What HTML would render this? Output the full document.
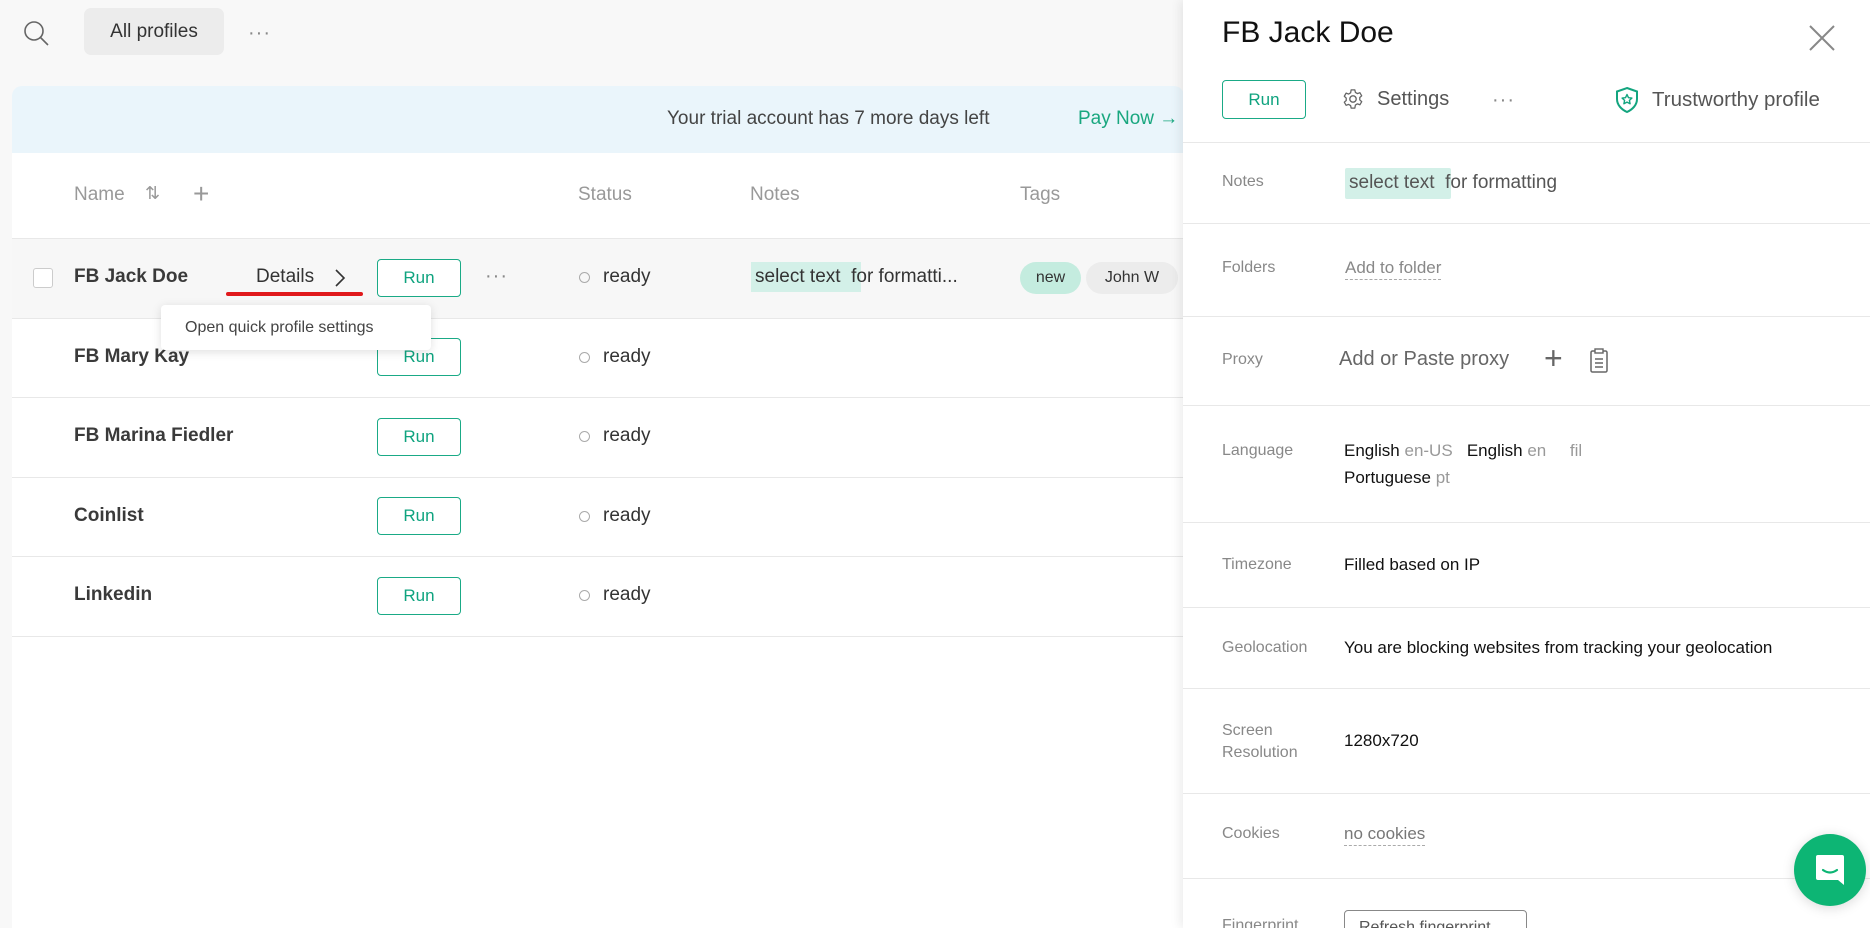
<!DOCTYPE html>
<html><head><meta charset="utf-8"><style>
*{margin:0;padding:0;box-sizing:border-box}
html,body{width:1870px;height:928px;overflow:hidden}
body{background:#f8f8f8;font-family:"Liberation Sans",Arial,sans-serif;position:relative;color:#333}
.a{position:absolute;white-space:nowrap}
.run{position:absolute;border:1.5px solid #1aaa86;border-radius:4px;color:#0fa37f;font-size:17px;display:flex;align-items:center;justify-content:center;background:#fff}
.dots{position:absolute;color:#888;font-size:20px;letter-spacing:1px}
.line{position:absolute;height:1px;background:#e8e8e8}
.lbl{position:absolute;color:#888;font-size:16px;left:1222px}
.val{position:absolute;color:#111;font-size:17px;left:1344px;white-space:nowrap}
.row .nm{font-size:19px;font-weight:bold;color:#3a3a3a}
.st{position:absolute;width:11px;height:11px;border:1.5px solid #aaa;border-radius:50%}
</style></head><body>
<svg class="a" style="left:22px;top:19px" width="30" height="30" viewBox="0 0 30 30"><circle cx="12" cy="12" r="9" fill="none" stroke="#666" stroke-width="1.6"/><line x1="18.5" y1="18.5" x2="26" y2="26" stroke="#666" stroke-width="1.6"/></svg>
<div class="a" style="left:84px;top:8px;width:140px;height:47px;background:#ececec;border-radius:7px;font-size:19px;color:#333;line-height:47px;text-align:center">All profiles</div>
<div class="dots" style="left:248px;top:22px">···</div>
<div class="a" style="left:12px;top:86px;width:1172px;height:68px;background:#eaf5fb;border-radius:10px 10px 0 0"></div>
<div class="a" style="left:667px;top:108px;font-size:19px;color:#444">Your trial account has 7 more days left</div>
<div class="a" style="left:1078px;top:108px;font-size:19px;color:#19a77f">Pay Now →</div>
<div class="a" style="left:12px;top:153px;width:1172px;height:775px;background:#fff"></div>
<div class="a" style="left:74px;top:184px;font-size:19px;color:#999">Name</div>
<div class="a" style="left:145px;top:183px;font-size:18px;color:#999">⇅</div>
<div class="a" style="left:193px;top:178px;font-size:28px;color:#999;font-weight:300">+</div>
<div class="a" style="left:578px;top:184px;font-size:19px;color:#999">Status</div>
<div class="a" style="left:750px;top:184px;font-size:19px;color:#999">Notes</div>
<div class="a" style="left:1020px;top:184px;font-size:19px;color:#999">Tags</div>
<div class="line" style="left:12px;top:238px;width:1172px"></div>
<div class="a" style="left:12px;top:239px;width:1172px;height:79px;background:#f7f7f7"></div>
<div class="line" style="left:12px;top:318px;width:1172px"></div>
<div class="line" style="left:12px;top:397px;width:1172px"></div>
<div class="line" style="left:12px;top:477px;width:1172px"></div>
<div class="line" style="left:12px;top:556px;width:1172px"></div>
<div class="line" style="left:12px;top:636px;width:1172px"></div>
<div class="a" style="left:33px;top:268px;width:20px;height:20px;border:1.5px solid #ccc;border-radius:3px;background:#fff"></div>
<div class="a row" style="left:74px;top:266px"><span class="nm">FB Jack Doe</span></div>
<div class="a" style="left:256px;top:266px;font-size:19px;color:#333">Details</div>
<svg class="a" style="left:333px;top:267px" width="14" height="22"><polyline points="3,3 11,11 3,19" fill="none" stroke="#333" stroke-width="1.6"/></svg>
<div class="a" style="left:226px;top:292px;width:137px;height:4px;background:#e0191c;border-radius:2px"></div>
<div class="dots" style="left:485px;top:265px">···</div>
<div class="a" style="left:751px;top:262px;width:110px;height:30px;background:#d3f0e8"></div>
<div class="a" style="left:755px;top:266px;font-size:19px;color:#333">select text&nbsp; for formatti...</div>
<div class="a" style="left:1020px;top:262px;width:61px;height:32px;background:#c4ecdf;border-radius:16px;font-size:16px;line-height:32px;text-align:center;color:#333">new</div>
<div class="a" style="left:1086px;top:262px;width:92px;height:32px;background:#ececec;border-radius:16px;font-size:16px;line-height:32px;text-align:center;color:#333">John W</div>
<div class="a row" style="left:74px;top:346px"><span class="nm">FB Mary Kay</span></div>
<div class="a row" style="left:74px;top:425px"><span class="nm">FB Marina Fiedler</span></div>
<div class="a row" style="left:74px;top:505px"><span class="nm">Coinlist</span></div>
<div class="a row" style="left:74px;top:584px"><span class="nm">Linkedin</span></div>
<div class="run" style="left:377px;top:259px;width:84px;height:38px">Run</div>
<div class="run" style="left:377px;top:338px;width:84px;height:38px">Run</div>
<div class="run" style="left:377px;top:418px;width:84px;height:38px">Run</div>
<div class="run" style="left:377px;top:497px;width:84px;height:38px">Run</div>
<div class="run" style="left:377px;top:577px;width:84px;height:38px">Run</div>
<div class="st" style="left:579px;top:272px"></div><div class="a" style="left:603px;top:266px;font-size:19px">ready</div>
<div class="st" style="left:579px;top:352px"></div><div class="a" style="left:603px;top:346px;font-size:19px">ready</div>
<div class="st" style="left:579px;top:431px"></div><div class="a" style="left:603px;top:425px;font-size:19px">ready</div>
<div class="st" style="left:579px;top:511px"></div><div class="a" style="left:603px;top:505px;font-size:19px">ready</div>
<div class="st" style="left:579px;top:590px"></div><div class="a" style="left:603px;top:584px;font-size:19px">ready</div>
<div class="a" style="left:161px;top:305px;width:270px;height:45px;background:#fff;border-radius:4px;box-shadow:0 2px 10px rgba(0,0,0,.13);font-size:16px;color:#444;line-height:45px;padding-left:24px">Open quick profile settings</div>
<div class="a" style="left:1183px;top:0;width:687px;height:928px;background:#fff;box-shadow:-3px 0 10px rgba(0,0,0,.08)"></div>
<div class="a" style="left:1222px;top:16px;font-size:30px;color:#111">FB Jack Doe</div>
<svg class="a" style="left:1808px;top:24px" width="28" height="28"><path d="M2 2L26 26M26 2L2 26" stroke="#888" stroke-width="2"/></svg>
<div class="run" style="left:1222px;top:80px;width:84px;height:39px">Run</div>
<svg class="a" style="left:1342px;top:88px" width="22" height="22" viewBox="0 0 24 24"><circle cx="12" cy="12" r="3.5" fill="none" stroke="#666" stroke-width="1.5"/><path d="M10 2h4l.6 2.8 2.2 1.3 2.7-1 2 3.4-2.1 1.9v2.6l2.1 1.9-2 3.4-2.7-1-2.2 1.3L14 22h-4l-.6-2.8-2.2-1.3-2.7 1-2-3.4 2.1-1.9v-2.6L2.5 9l2-3.4 2.7 1 2.2-1.3z" fill="none" stroke="#666" stroke-width="1.4" stroke-linejoin="round"/></svg>
<div class="a" style="left:1377px;top:88px;font-size:20px;color:#555">Settings</div>
<div class="dots" style="left:1492px;top:89px">···</div>
<svg class="a" style="left:1614px;top:86px" width="26" height="28" viewBox="0 0 26 28"><path d="M13 2L23 5.5V13c0 6-4.5 10.5-10 13C7.5 23.5 3 19 3 13V5.5z" fill="none" stroke="#13a57f" stroke-width="2"/><path d="M13 8.5l1.5 3.2 3.4.4-2.5 2.3.7 3.4-3.1-1.7-3.1 1.7.7-3.4-2.5-2.3 3.4-.4z" fill="none" stroke="#13a57f" stroke-width="1.4" stroke-linejoin="round"/></svg>
<div class="a" style="left:1652px;top:88px;font-size:20.5px;color:#555">Trustworthy profile</div>
<div class="line" style="left:1183px;top:142px;width:687px"></div>
<div class="lbl" style="top:173px">Notes</div>
<div class="a" style="left:1345px;top:168px;width:106px;height:31px;background:#d3f0e8;border-radius:2px"></div>
<div class="a" style="left:1349px;top:172px;font-size:19px;color:#555">select text&nbsp; for formatting</div>
<div class="line" style="left:1183px;top:223px;width:687px"></div>
<div class="lbl" style="top:259px">Folders</div>
<div class="a" style="left:1345px;top:258px;font-size:17px;color:#888;border-bottom:1px dashed #aaa;padding-bottom:1px">Add to folder</div>
<div class="line" style="left:1183px;top:316px;width:687px"></div>
<div class="lbl" style="top:351px">Proxy</div>
<div class="a" style="left:1339px;top:348px;font-size:20px;color:#666">Add or Paste proxy</div>
<div class="a" style="left:1544px;top:340px;font-size:32px;color:#666;font-weight:300">+</div>
<svg class="a" style="left:1589px;top:348px" width="20" height="26" viewBox="0 0 20 26"><rect x="2" y="3" width="16" height="21" rx="1.5" fill="none" stroke="#666" stroke-width="1.5"/><rect x="6" y="1" width="8" height="4" fill="#fff" stroke="#666" stroke-width="1.4"/><path d="M6 11h8M6 15h8M6 19h8" stroke="#666" stroke-width="1.5"/></svg>
<div class="line" style="left:1183px;top:405px;width:687px"></div>
<div class="lbl" style="top:442px">Language</div>
<div class="val" style="top:441px;font-size:17px">English <span style="color:#999">en-US</span>&nbsp;&nbsp; English <span style="color:#999">en</span>&nbsp;&nbsp;&nbsp;&nbsp; <span style="color:#999">fil</span></div>
<div class="val" style="top:468px;font-size:17px">Portuguese <span style="color:#999">pt</span></div>
<div class="line" style="left:1183px;top:522px;width:687px"></div>
<div class="lbl" style="top:556px">Timezone</div>
<div class="val" style="top:555px">Filled based on IP</div>
<div class="line" style="left:1183px;top:607px;width:687px"></div>
<div class="lbl" style="top:639px">Geolocation</div>
<div class="val" style="top:638px">You are blocking websites from tracking your geolocation</div>
<div class="line" style="left:1183px;top:688px;width:687px"></div>
<div class="lbl" style="top:720px;line-height:22px">Screen<br>Resolution</div>
<div class="val" style="top:731px">1280x720</div>
<div class="line" style="left:1183px;top:793px;width:687px"></div>
<div class="lbl" style="top:825px">Cookies</div>
<div class="a" style="left:1344px;top:824px;font-size:17px;color:#777;border-bottom:1px dashed #aaa;padding-bottom:1px">no cookies</div>
<div class="line" style="left:1183px;top:878px;width:687px"></div>
<div class="lbl" style="top:917px">Fingerprint</div>
<div class="a" style="left:1344px;top:910px;width:183px;height:30px;border:1.5px solid #888;border-radius:4px;font-size:16px;color:#555;padding:8px 0 0 14px">Refresh fingerprint</div>
<div class="a" style="left:1794px;top:834px;width:72px;height:72px;border-radius:50%;background:#0db574;box-shadow:0 2px 12px rgba(0,0,0,.15)"></div>
<svg class="a" style="left:1814px;top:853px" width="32" height="34" viewBox="0 0 32 34"><path d="M4 2h24a2 2 0 0 1 2 2v28l-6-5H4a2 2 0 0 1-2-2V4a2 2 0 0 1 2-2z" fill="#fff"/><path d="M9 17q7 5 14 0" fill="none" stroke="#0db574" stroke-width="2.2" stroke-linecap="round"/></svg>
</body></html>
